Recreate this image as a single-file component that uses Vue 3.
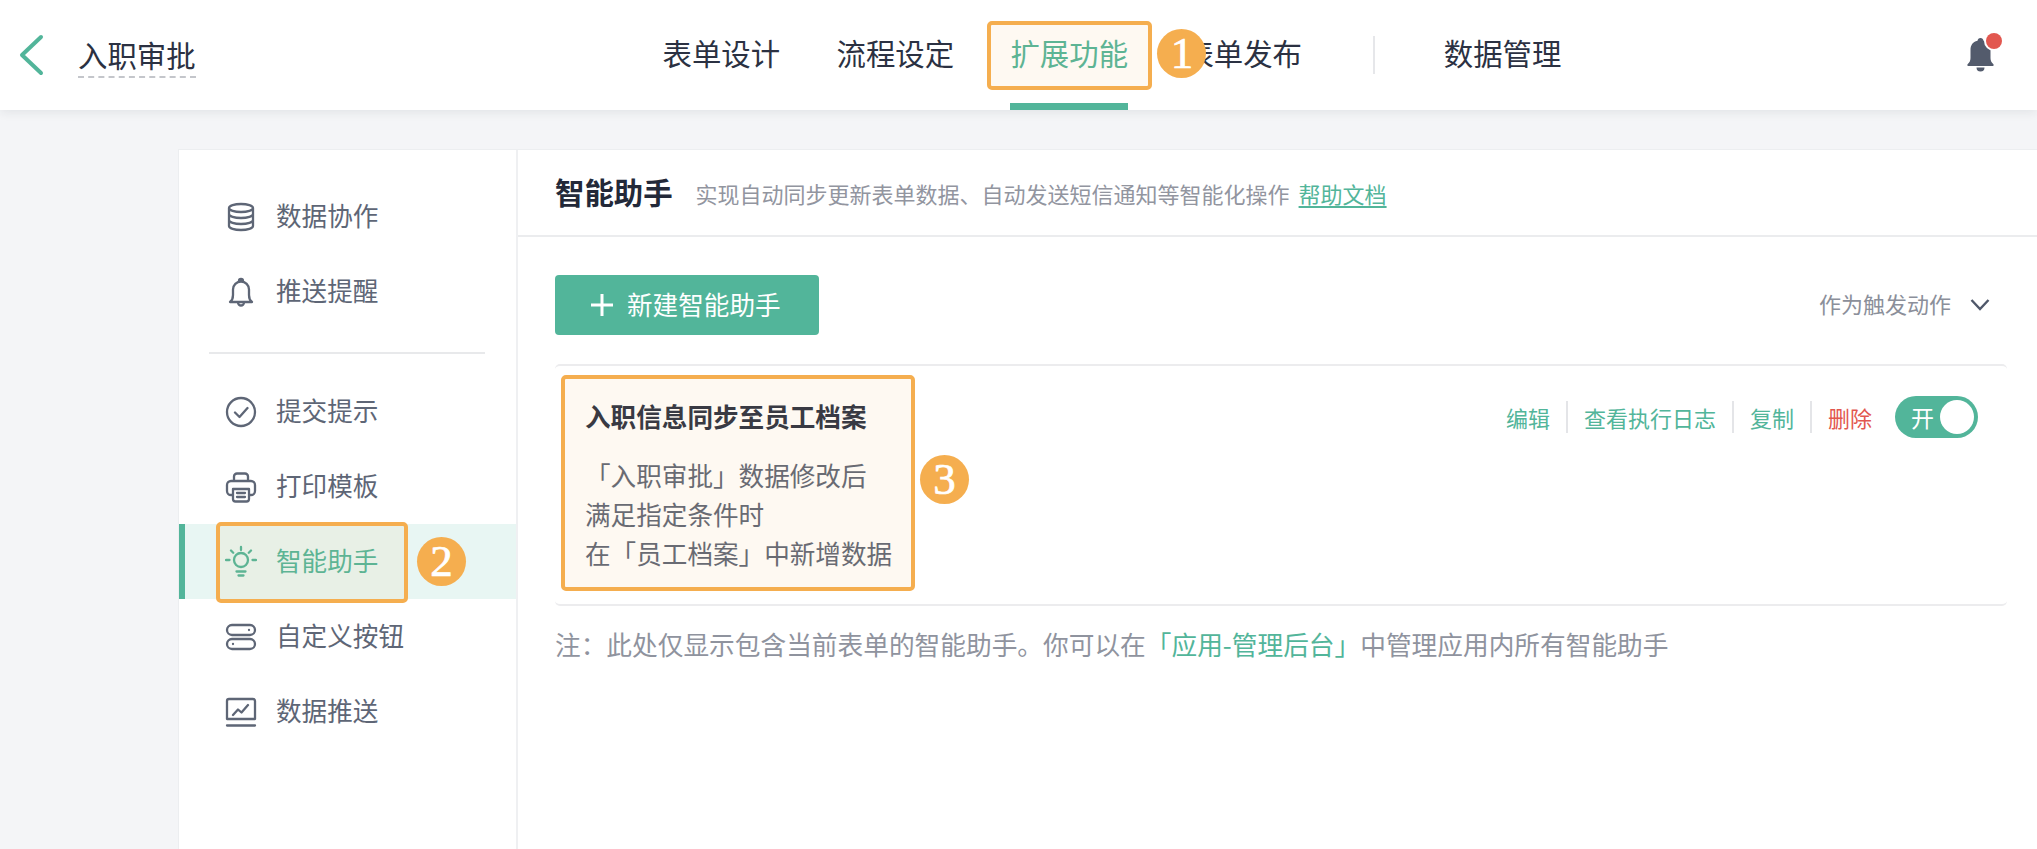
<script setup>
const tabs = ['表单设计', '流程设定', '扩展功能', '表单发布']

const icons = {
  db: 'M4 8c0-2.2 5.4-4 12-4s12 1.8 12 4-5.4 4-12 4S4 10.2 4 8z M4 8v18c0 2.2 5.4 4 12 4s12-1.8 12-4V8 M4 14c0 2.2 5.4 4 12 4s12-1.8 12-4 M4 20c0 2.2 5.4 4 12 4s12-1.8 12-4',
  bell: 'M5 27c2.2-1.6 3-4 3-7v-5.5a8 8 0 0 1 16 0V20c0 3 .8 5.4 3 7z M14 6.800V6a2 2 0 0 1 4 0v.8 M13 27.500a3 3 0 0 0 6 0',
  check: 'M30 17a14 14 0 1 1-28 0 14 14 0 0 1 28 0z M10 17.500l4.500 4.500 8-9',
  printer: 'M9 11V6.500a3 3 0 0 1 3-3h8a3 3 0 0 1 3 3V11 M8 25H6a4 4 0 0 1-4-4v-6a4 4 0 0 1 4-4h20a4 4 0 0 1 4 4v6a4 4 0 0 1-4 4h-2 M8 19h16v10a2.500 2.500 0 0 1-2.500 2.500h-11A2.500 2.500 0 0 1 8 29z M12 23h8 M12 27h8',
  bulb: 'M23 15a7 7 0 1 1-14 0 7 7 0 0 1 14 0z M16 2v3 M1 15h3.500 M27.500 15H31 M6 5.500l2.200 2.200 M26 5.500l-2.200 2.200 M11.500 26.500h9 M13.500 30.500h5',
  toggles: 'M7 5h18a5 5 0 0 1 0 10H7a5 5 0 0 1 0-10z M7 19h18a5 5 0 0 1 0 10H7a5 5 0 0 1 0-10z M24 10h.01 M8 24h.01',
  chart: 'M4 4h24a2 2 0 0 1 2 2v18H2V6a2 2 0 0 1 2-2z M2 30.500h28 M8 20l5-5.500 3.500 3L23 10'
}

const topMenu = [
  { label: '数据协作', icon: 'db' },
  { label: '推送提醒', icon: 'bell' }
]
const bottomMenu = [
  { label: '提交提示', icon: 'check' },
  { label: '打印模板', icon: 'printer' },
  { label: '智能助手', icon: 'bulb', active: true },
  { label: '自定义按钮', icon: 'toggles' },
  { label: '数据推送', icon: 'chart' }
]
</script>

<template>
  <div class="page">
    <header class="topbar">
      <svg class="back" width="26" height="46" viewBox="0 0 26 46">
        <path d="M23 5L4 23l19 18" />
      </svg>
      <div class="form-name">入职审批</div>
      <nav class="tabs">
        <div v-for="t in tabs" :key="t" class="tab" :class="{ active: t === '扩展功能' }">
          {{ t }}
          <template v-if="t === '扩展功能'">
            <span class="mark mark-tab" />
            <span class="badge badge-tab">1</span>
          </template>
        </div>
        <span class="tab-sep" />
        <div class="tab">数据管理</div>
      </nav>
      <div class="notice">
        <svg width="27" height="36" viewBox="0 0 27 36">
          <path d="M13.500 1c-1.700 0-2.800 1.200-3 2.800C5.500 5 3.500 8.500 3.500 13v8c0 2.600-1 4.500-2.700 6-.9.800-.4 2 .7 2h24c1.100 0 1.600-1.200.7-2-1.700-1.500-2.700-3.400-2.700-6v-8c0-4.500-2-8-7-9.200-.2-1.600-1.300-2.800-3-2.800z M9.500 30.500h8a4 4 0 0 1-8 0z" />
        </svg>
        <span class="dot" />
      </div>
    </header>

    <main class="shell">
      <aside class="side">
        <div v-for="m in topMenu" :key="m.label" class="side-item">
          <svg class="side-icon" width="32" height="34" viewBox="0 0 32 34">
            <path :d="icons[m.icon]" />
          </svg>
          <span class="side-label">{{ m.label }}</span>
        </div>
        <div class="side-line" />
        <div v-for="m in bottomMenu" :key="m.label" class="side-item" :class="{ active: m.active }">
          <svg class="side-icon" width="32" height="34" viewBox="0 0 32 34">
            <path :d="icons[m.icon]" />
          </svg>
          <span class="side-label">{{ m.label }}</span>
          <template v-if="m.active">
            <span class="mark mark-side" />
            <span class="badge badge-side">2</span>
          </template>
        </div>
      </aside>

      <section class="panel">
        <div class="panel-head">
          <h1>智能助手</h1>
          <span class="desc">实现自动同步更新表单数据、自动发送短信通知等智能化操作</span>
          <a class="doc">帮助文档</a>
        </div>
        <div class="panel-body">
          <div class="toolbar">
            <button class="add">
              <svg width="24" height="24" viewBox="0 0 24 24"><path d="M12 1v22M1 12h22" /></svg>
              <span class="add-label">新建智能助手</span>
            </button>
            <div class="filter">
              <span class="filter-label">作为触发动作</span>
              <svg width="20" height="14" viewBox="0 0 20 14"><path d="M1.500 2L10 11l8.500-9" /></svg>
            </div>
          </div>

          <div class="card">
            <div class="info">
              <div class="info-title">入职信息同步至员工档案</div>
              <div class="info-text">
                <p>「入职审批」数据修改后</p>
                <p>满足指定条件时</p>
                <p>在「员工档案」中新增数据</p>
              </div>
            </div>
            <div class="actions">
              <a>编辑</a>
              <span class="act-sep" />
              <a>查看执行日志</a>
              <span class="act-sep" />
              <a>复制</a>
              <span class="act-sep" />
              <a class="danger">删除</a>
              <div class="switch">
                <span>开</span>
                <i />
              </div>
            </div>
            <span class="mark mark-card" />
            <span class="badge badge-card">3</span>
          </div>

          <p class="note">注：此处仅显示包含当前表单的智能助手。你可以在<em>「应用-管理后台」</em>中管理应用内所有智能助手</p>
        </div>
      </section>
    </main>
  </div>
</template>

<style scoped>
.page {
  height: 849px;
  display: flex;
  flex-direction: column;
  background: #f4f5f7;
  font-family: "Noto Sans CJK SC", "Noto Sans", sans-serif;
  color: #2b3142;
  overflow: hidden;
}

.topbar {
  position: relative;
  z-index: 2;
  flex: none;
  height: 110px;
  display: flex;
  align-items: center;
  padding-left: 18px;
  background: #fff;
  box-shadow: 0 2px 10px rgba(30, 40, 60, 0.09);
}
.back path {
  fill: none;
  stroke: #52b59a;
  stroke-width: 4;
  stroke-linecap: round;
  stroke-linejoin: round;
}
.form-name {
  margin-left: 34px;
  font-size: 29.4px;
  line-height: 36px;
  padding-bottom: 4px;
  margin-top: 3px;
  border-bottom: 2px dashed #c4c6cb;
}
.tabs {
  height: 100%;
  display: flex;
  align-items: center;
  gap: 56.400px;
  margin-left: 467px;
}
.tab {
  position: relative;
  font-size: 29.4px;
  line-height: 104px;
  padding-bottom: 6px;
  white-space: nowrap;
}
.tab.active {
  color: #52b59a;
}
.tab.active::after {
  content: '';
  position: absolute;
  left: 0;
  right: 0;
  bottom: 0;
  height: 7px;
  background: #52b59a;
}
.tab-sep {
  width: 2px;
  height: 38px;
  margin: 0 12px 0 15px;
  background: #e6e7ea;
}
.notice {
  position: relative;
  margin-left: auto;
  margin-right: 43px;
  height: 36px;
}
.notice svg {
  display: block;
}
.notice path {
  fill: #535b6c;
}
.dot {
  position: absolute;
  right: -8px;
  top: -4px;
  width: 16px;
  height: 16px;
  border-radius: 50%;
  background: #e2574f;
  box-shadow: 0 0 0 2px #fff;
}

.mark {
  position: absolute;
  z-index: 3;
  box-sizing: border-box;
  border: 4px solid #f5ae4f;
  border-radius: 5px;
  background: rgba(245, 174, 79, 0.075);
  pointer-events: none;
}
.badge {
  position: absolute;
  z-index: 4;
  width: 49px;
  height: 49px;
  border-radius: 50%;
  background: #f5ae4f;
  color: #fff;
  font-family: "Liberation Serif", serif;
  font-weight: 400;
  font-size: 45px;
  line-height: 48px;
  text-align: center;
  -webkit-text-stroke: 0.7px #fff;
}
.mark-tab {
  left: -23px;
  right: -24px;
  top: 21px;
  height: 69px;
}
.badge-tab {
  left: 147px;
  top: 29px;
}
.mark-side {
  left: 37px;
  top: -2px;
  width: 192px;
  height: 81px;
}
.badge-side {
  left: 238px;
  top: 13px;
}
.mark-card {
  left: 6px;
  top: 9px;
  width: 354px;
  height: 216px;
}
.badge-card {
  left: 365px;
  top: 89px;
}

.shell {
  flex: 1;
  display: flex;
  margin: 39px 0 0 178px;
  background: #fff;
  border-left: 1px solid #eceef0;
  border-top: 1px solid #eceef0;
}
.side {
  flex: none;
  width: 337px;
  padding-top: 29px;
  border-right: 2px solid #eff0f2;
}
.side-item {
  position: relative;
  height: 75px;
  display: flex;
  align-items: center;
  gap: 19px;
  padding-left: 46px;
  font-size: 25.6px;
  color: #5e6676;
}
.side-label {
  padding-bottom: 5px;
}
.side-item.active {
  background: #e8f6f3;
  color: #52b59a;
}
.side-item.active::before {
  content: '';
  position: absolute;
  left: 0;
  top: 0;
  bottom: 0;
  width: 6px;
  background: #52b59a;
}
.side-icon path {
  fill: none;
  stroke: currentColor;
  stroke-width: 2.3;
  stroke-linecap: round;
  stroke-linejoin: round;
}
.side-line {
  height: 2px;
  margin: 23px 31px 20px 30px;
  background: #e8e9eb;
}

.panel {
  flex: 1;
  min-width: 0;
}
.panel-head {
  height: 85px;
  display: flex;
  align-items: center;
  padding-left: 37px;
  border-bottom: 2px solid #ebecee;
}
.panel-head h1 {
  margin: 0 0 4px;
  font-size: 29.4px;
  font-weight: 700;
  color: #232939;
}
.desc {
  margin-left: 23px;
  font-size: 22px;
  color: #92959f;
}
.doc {
  margin-left: 9px;
  font-size: 22px;
  color: #52b59a;
  text-decoration: underline;
  text-underline-offset: 3px;
}
.panel-body {
  padding: 38px 30px 0 37px;
}
.toolbar {
  display: flex;
  align-items: center;
  justify-content: space-between;
  padding-right: 17px;
}
.add {
  width: 264px;
  height: 60px;
  display: flex;
  align-items: center;
  gap: 13px;
  padding: 0 0 0 35px;
  border: 0;
  border-radius: 4px;
  background: #52b59a;
  color: #fff;
  font-family: inherit;
  font-size: 25.6px;
}
.add-label,
.filter-label {
  padding-bottom: 4px;
}
.add path {
  fill: none;
  stroke: #fff;
  stroke-width: 3;
}
.filter {
  display: flex;
  align-items: center;
  gap: 19px;
  font-size: 22px;
  color: #8b8f9a;
}
.filter path {
  fill: none;
  stroke: #4f586a;
  stroke-width: 2.4;
}

.card {
  position: relative;
  height: 238px;
  margin-top: 29px;
  display: flex;
  justify-content: space-between;
  align-items: flex-start;
  border-top: 2px solid #ececee;
  border-bottom: 2px solid #ececee;
  border-radius: 5px;
}
.info {
  padding: 33px 0 0 30px;
}
.info-title {
  font-size: 25.6px;
  font-weight: 700;
  line-height: 34px;
  color: #2b3142;
}
.info-text {
  margin-top: 22px;
  font-size: 25.6px;
  line-height: 39px;
  color: #5e6676;
}
.info-text p {
  margin: 0;
}
.actions {
  display: flex;
  align-items: center;
  gap: 16px;
  margin-top: 30px;
  padding-right: 29px;
  font-size: 22px;
  color: #52b59a;
}
.act-sep {
  width: 2px;
  height: 32px;
  background: #e4e5e8;
}
.danger {
  color: #e2574f;
}
.switch {
  width: 83px;
  height: 42px;
  margin-left: 7px;
  box-sizing: border-box;
  display: flex;
  align-items: center;
  justify-content: space-between;
  padding: 0 4px 0 16px;
  border-radius: 21px;
  background: #52b59a;
  color: #fff;
  font-size: 23px;
}
.switch i {
  width: 34px;
  height: 34px;
  border-radius: 50%;
  background: #fff;
}
.note {
  margin: 19px 0 0;
  font-size: 25.7px;
  line-height: 38px;
  color: #8f939e;
  white-space: nowrap;
}
.note em {
  font-style: normal;
  color: #52b59a;
}
</style>

<style>
html,
body {
  margin: 0;
  background: #f4f5f7;
}
</style>
